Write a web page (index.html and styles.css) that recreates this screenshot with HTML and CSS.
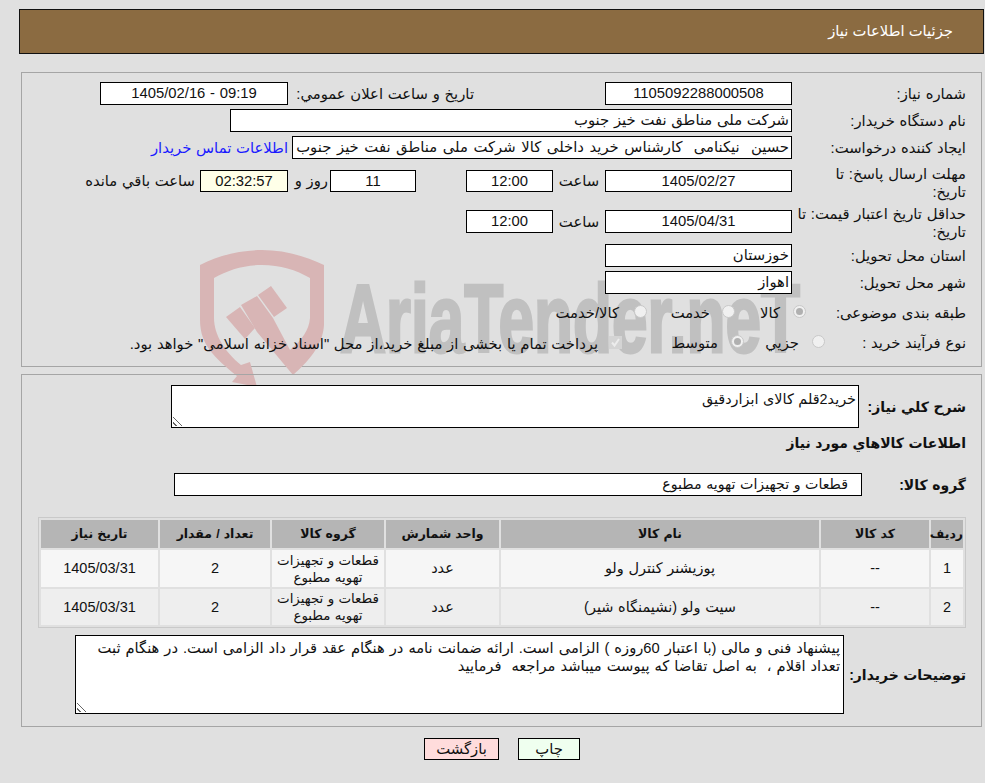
FILE: index.html
```html
<!DOCTYPE html>
<html lang="fa" dir="rtl">
<head>
<meta charset="utf-8">
<title>جزئیات اطلاعات نیاز</title>
<link rel="stylesheet" href="styles.css">
</head>
<body>
<header class="title-bar">جزئیات اطلاعات نیاز</header>

<section class="panel panel-top">
  <svg class="watermark" viewBox="190 240 620 150">
    <path class="wm-shield" d="M200 265C220 255 241 250 262 250C284 250 305 256 324 265V325C323 345 308 362 293 375L257 332L241 305L257 296L273 318L290 350C302 340 309 330 310 318V278C296 270 280 265 262 265C244 265 228 270 214 278V318C214 335 225 352 241 365L250 362L257 387L232 382L237 376C215 358 200 345 200 320Z"/>
    <path class="wm-shield" d="M226 317L240 307L255 328L245 339Z"/>
    <path class="wm-shield" d="M258 295L271 286L287 308L274 317Z"/>
    <text class="wm-text" x="340" y="352" textLength="460" lengthAdjust="spacingAndGlyphs">AriaTender.neT</text>
  </svg>

  <div class="row row-1">
    <label class="lbl">شماره نیاز:</label>
    <output class="box box-md ctr">1105092288000508</output>
    <label class="lbl-mid">تاریخ و ساعت اعلان عمومي:</label>
    <output class="box box-pub ctr" dir="ltr">1405/02/16 - 09:19</output>
  </div>
  <div class="row row-2">
    <label class="lbl">نام دستگاه خریدار:</label>
    <output class="box box-buyer">شرکت ملی مناطق نفت خیز جنوب</output>
  </div>
  <div class="row row-3">
    <label class="lbl">ایجاد کننده درخواست:</label>
    <output class="box box-creator">حسین&nbsp; نیکنامی&nbsp; کارشناس خرید داخلی کالا شرکت ملی مناطق نفت خیز جنوب</output>
    <a class="contact" href="#">اطلاعات تماس خریدار</a>
  </div>
  <div class="row row-4">
    <label class="lbl two-line">مهلت ارسال پاسخ: تا<br>تاریخ:</label>
    <output class="box box-md ctr">1405/02/27</output>
    <span class="word-hour">ساعت</span>
    <output class="box box-time ctr">12:00</output>
    <output class="box box-days ctr">11</output>
    <span class="word-day">روز و</span>
    <output class="box box-left ctr">02:32:57</output>
    <span class="word-left">ساعت باقي مانده</span>
  </div>
  <div class="row row-5">
    <label class="lbl two-line">حداقل تاریخ اعتبار قیمت: تا<br>تاریخ:</label>
    <output class="box box-md ctr">1405/04/31</output>
    <span class="word-hour">ساعت</span>
    <output class="box box-time ctr">12:00</output>
  </div>
  <div class="row row-6">
    <label class="lbl">استان محل تحویل:</label>
    <output class="box box-md">خوزستان</output>
  </div>
  <div class="row row-7">
    <label class="lbl">شهر محل تحویل:</label>
    <output class="box box-md">اهواز</output>
  </div>
  <div class="row row-8">
    <label class="lbl-radio lbl-cat">طبقه بندی موضوعی:</label>
    <span class="radio on"></span><span class="opt o-kala">کالا</span>
    <span class="radio"></span><span class="opt o-khed">خدمت</span>
    <span class="radio"></span><span class="opt o-both">کالا/خدمت</span>
  </div>
  <div class="row row-9">
    <label class="lbl-radio lbl-proc">نوع فرآیند خرید :</label>
    <span class="radio"></span><span class="opt o-jozi">جزیي</span>
    <span class="radio on"></span><span class="opt o-mot">متوسط</span>
    <span class="check"><svg viewBox="0 0 13 13" aria-hidden="true"><path d="M3 6.5L5.5 9.5L10 3"/></svg></span>
    <span class="opt o-pay">پرداخت تمام یا بخشی از مبلغ خرید،از محل "اسناد خزانه اسلامی" خواهد بود.</span>
  </div>
</section>

<section class="panel panel-bottom">
  <div class="desc-row">
    <label class="blbl">شرح کلي نیاز:</label>
    <div class="area area-desc">خرید2قلم کالای ابزاردقیق<span class="grip"></span></div>
  </div>
  <h2 class="blbl items-head">اطلاعات کالاهاي مورد نیاز</h2>
  <div class="group-row">
    <label class="blbl">گروه کالا:</label>
    <output class="box box-group">قطعات و تجهیزات تهویه مطبوع</output>
  </div>
  <table class="items">
    <thead>
      <tr><th class="c1">ردیف</th><th class="c2">کد کالا</th><th class="c3">نام کالا</th><th class="c4">واحد شمارش</th><th class="c5">گروه کالا</th><th class="c6">تعداد / مقدار</th><th class="c7">تاریخ نیاز</th></tr>
    </thead>
    <tbody>
      <tr class="odd"><td>1</td><td>--</td><td>پوزیشنر کنترل ولو</td><td>عدد</td><td class="grp">قطعات و تجهیزات تهویه مطبوع</td><td>2</td><td>1405/03/31</td></tr>
      <tr class="even"><td>2</td><td>--</td><td>سیت ولو (نشیمنگاه شیر)</td><td>عدد</td><td class="grp">قطعات و تجهیزات تهویه مطبوع</td><td>2</td><td>1405/03/31</td></tr>
    </tbody>
  </table>
  <div class="notes-row">
    <label class="blbl">توضیحات خریدار:</label>
    <div class="area area-notes">پیشنهاد فنی و مالی (با اعتبار 60روزه ) الزامی است. ارائه ضمانت نامه در هنگام عقد قرار داد الزامی است. در هنگام ثبت تعداد اقلام ،&nbsp; به اصل تقاضا که پیوست میباشد مراجعه&nbsp; فرمایید<span class="grip"></span></div>
  </div>
</section>

<div class="actions">
  <button class="btn btn-print" type="button">چاپ</button>
  <button class="btn btn-back" type="button">بازگشت</button>
</div>
</body>
</html>
```
FILE: styles.css
```css
* { box-sizing: border-box; }
html, body { margin: 0; padding: 0; }
body {
  width: 985px;
  height: 783px;
  overflow: hidden;
  background: #e0e0e0;
  color: #111;
  font: 14.8px/18px "Liberation Sans", "DejaVu Sans", sans-serif;
  word-spacing: .6px;
  padding: 9px 0 0;
}
.title-bar {
  margin: 0 1px 0 19px;
  height: 45px;
  background: #8b6b41;
  border: 1px solid #111;
  color: #fff;
  line-height: 43px;
  padding-right: 30px;
  word-spacing: 0;
}
.panel {
  position: relative;
  margin: 0 3px 0 21px;
  border: 1px solid #a5a5a5;
}
.panel-top { margin-top: 18px; height: 295px; }
.panel-bottom { margin-top: 7px; height: 353px; }
.watermark {
  position: absolute;
  left: 168px;
  top: 167px;
  width: 620px;
  height: 150px;
  overflow: visible;
  pointer-events: none;
}
.wm-shield { fill: #d8b5b5; }
.wm-text {
  direction: ltr;
  text-anchor: start;
  fill: #c0c0c0;
  stroke: #c0c0c0;
  stroke-width: 3px;
  word-spacing: 0;
  font: 700 96px "Liberation Sans", sans-serif;
}
.row {
  position: relative;
  display: flex;
  align-items: center;
  height: 23px;
  padding-right: 15px;
}
.row-1 { margin-top: 9px; }
.row-2 { margin-top: 4px; }
.row-3 { margin-top: 4px; }
.row-4 { margin-top: 11px; height: 22px; }
.row-5 { margin-top: 18px; }
.row-6 { margin-top: 11px; }
.row-7 { margin-top: 4px; }
.row-8 { margin-top: 7px; height: 24px; }
.row-9 { margin-top: 6px; height: 24px; }
.lbl { width: 174px; flex: none; white-space: nowrap; }
.two-line { height: 36px; position: relative; top: 2px; }
.row-5 .two-line { top: 1px; }
.lbl-radio { flex: none; white-space: nowrap; }
.lbl-cat { width: 130px; margin-left: 30px; }
.lbl-proc { width: 128px; margin-left: 13px; padding-left: 0; }
.box {
  display: block;
  flex: none;
  height: 100%;
  border: 1px solid #000;
  background: #fff;
  line-height: 21px;
  padding: 0 2px;
  white-space: nowrap;
  overflow: hidden;
  position: relative;
}
.ctr { text-align: center; }
.box-md { width: 187px; }
.lbl-mid { flex: none; width: 181px; margin: 0 131px 0 5px; white-space: nowrap; }
.box-pub { width: 188px; }
.box-buyer { width: 562px; }
.box-creator { width: 500px; word-spacing: 1.5px; }
.contact { color: #1a1aff; text-decoration: none; margin-right: 4px; white-space: nowrap; }
.word-hour { width: 52px; flex: none; text-align: center; }
.box-time { width: 87px; }
.box-days { width: 86px; margin-right: 50px; }
.word-day { margin-right: 2px; width: 40px; flex: none; white-space: nowrap; }
.box-left { width: 88px; background: #ffffe8; }
.word-left { margin-right: 5px; white-space: nowrap; }
.radio {
  flex: none;
  width: 13px;
  height: 13px;
  border-radius: 50%;
  background: #f0f0f0;
  border: 1px solid #c8c8c8;
  position: relative;
  top: -2px;
}
.radio.on::after {
  content: "";
  position: absolute;
  inset: 2px;
  border-radius: 50%;
  background: #b0b0b0;
}
.opt { white-space: nowrap; flex: none; }
.o-kala { margin: 0 13px 0 25px; width: 20px; }
.o-khed { margin: 0 12px 0 23px; width: 40px; }
.o-both { margin-right: 15px; }
.o-jozi { margin: 0 13px 0 21px; width: 34px; }
.o-mot { margin: 0 13px 0 52px; width: 44px; }
.check {
  flex: none;
  width: 13px;
  height: 13px;
  background: #d4d4d4;
  position: relative;
  top: -1px;
}
.check svg { display: block; width: 13px; height: 13px; fill: none; stroke: #ececec; stroke-width: 2; }
.o-pay { margin-right: 11px; position: relative; top: 1px; }
.blbl { font-weight: 700; white-space: nowrap; margin: 0; font-size: 14px; }
.desc-row { display: flex; padding: 10px 15px 0 0; height: 54px; }
.desc-row .blbl { width: 107px; flex: none; padding-top: 13px; }
.area {
  position: relative;
  flex: none;
  border: 1px solid #000;
  background: #fff;
  overflow: hidden;
}
.area-desc { width: 688px; height: 43px; padding: 4px 2px; font-size: 14.4px; }
.grip {
  position: absolute;
  left: 1px;
  bottom: 1px;
  width: 10px;
  height: 10px;
  background: repeating-linear-gradient(45deg, transparent 0 2px, #666 2px 3px, transparent 3px 4px);
  clip-path: polygon(0 0, 100% 100%, 0 100%);
}
.items-head { padding: 2px 15px 0 0; height: 32px; line-height: 24px; }
.group-row { display: flex; align-items: center; padding: 0 15px 0 0; height: 23px; margin-top: 12px; }
.group-row .blbl { width: 104px; flex: none; }
.box-group { width: 688px; padding-right: 13px; font-size: 14.2px; }
.items {
  width: 928px;
  margin: 21px 15px 0 0;
  border-collapse: separate;
  border-spacing: 2px;
  border: 1px solid #c9c9c9;
  font-size: 14.5px;
  table-layout: fixed;
}
.items th {
  background: #b5b5b5;
  height: 28px;
  font-size: 12.5px;
  font-weight: 700;
  padding: 0;
  text-align: center;
}
.items td {
  padding: 0 2px;
  text-align: center;
  line-height: 17px;
}
.odd td { background: #f6f6f6; height: 37px; }
.even td { background: #eeeeee; height: 36px; }
.items td.grp { font-size: 13.4px; padding: 0; }
.c1 { width: 32px; }
.c2 { width: 108px; }
.c3 { width: 318px; }
.c4 { width: 113px; }
.c5 { width: 112px; }
.c6 { width: 110px; }
.c7 { width: 117px; }
.notes-row { display: flex; padding: 7px 15px 0 0; }
.notes-row .blbl { width: 122px; flex: none; padding-top: 31px; }
.area-notes { width: 769px; height: 79px; padding: 3px; font-size: 14.7px; word-spacing: .9px; }
.actions {
  display: flex;
  justify-content: center;
  gap: 19px;
  margin-top: 11px;
  padding-left: 19px;
}
.btn {
  font: inherit;
  height: 22px;
  border: 1px solid #000;
  color: #111;
  padding: 0;
  line-height: 20px;
}
.btn-print { width: 62px; background: #efffef; }
.btn-back { width: 75px; background: #ffdcdc; }
```
